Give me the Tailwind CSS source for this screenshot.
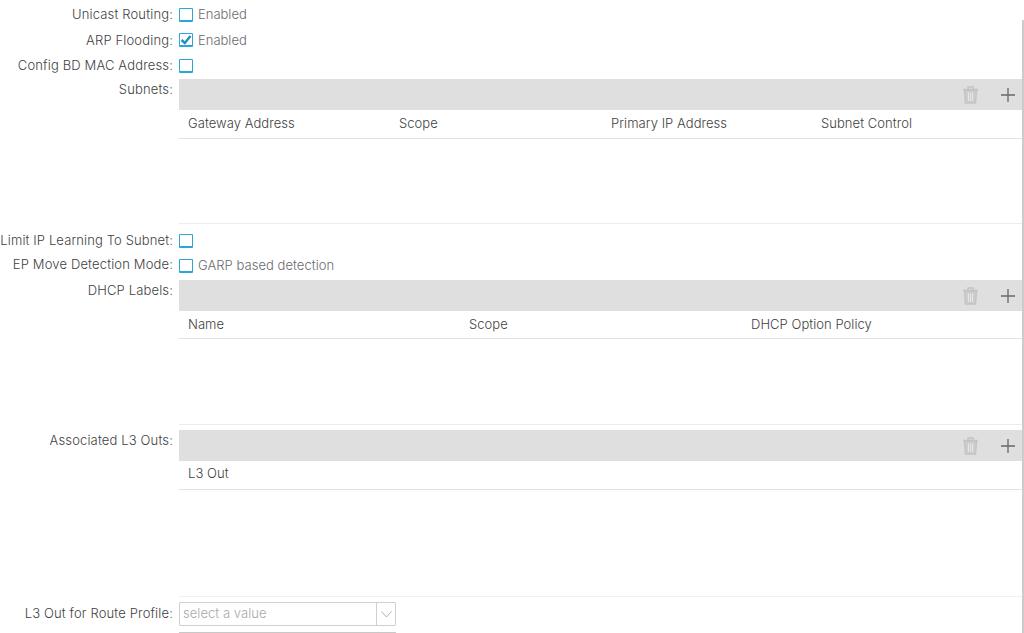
<!DOCTYPE html>
<html lang="en">
<head>
  <meta charset="UTF-8"/>
  <title>Bridge Domain</title>
  <script src="https://cdn.jsdelivr.net/npm/@tailwindcss/browser@4"></script>
</head>
<body class="bg-white">
  <div class="relative w-[1024px] h-[633px] overflow-hidden font-['Inter',sans-serif] font-light text-[13px] tracking-[0.05px] text-[#3f3f42] pt-[2px]">

    <!-- scrollbar on the right edge -->
    <div class="absolute right-0 top-[20px] bottom-0 w-[2px] bg-[#cccccc]"></div>

    <!-- Unicast Routing -->
    <div class="flex items-center h-[25px]">
      <div class="w-[173px] text-right tracking-[0.15px]">Unicast Routing:</div>
      <div class="ml-[6px] w-[14px] h-[14px] border border-[#2aa6dc] border-b-2 rounded-[1px]"></div>
      <span class="ml-[5px] text-[#6a6a6d] tracking-[0px]">Enabled</span>
    </div>

    <!-- ARP Flooding -->
    <div class="flex items-center h-[26px]">
      <div class="w-[173px] text-right tracking-[0.15px] pt-[1px]">ARP Flooding:</div>
      <div class="ml-[6px] w-[14px] h-[14px] border border-[#2aa6dc] border-b-2 rounded-[1px] flex items-center justify-center">
        <svg width="12" height="12" viewBox="0 0 12 12" fill="none" stroke="#1e8ec4" stroke-width="2.4"><path d="M1.5 6 L4.8 9 L10.5 2"/></svg>
      </div>
      <span class="ml-[5px] text-[#6a6a6d] tracking-[0px] pt-[1px]">Enabled</span>
    </div>

    <!-- Config BD MAC -->
    <div class="flex items-center h-[25px]">
      <div class="w-[173px] text-right tracking-[0.15px]">Config BD MAC Address:</div>
      <div class="ml-[6px] w-[14px] h-[14px] border border-[#2aa6dc] border-b-2 rounded-[1px]"></div>
    </div>

    <!-- Subnets -->
    <div class="flex mt-[1px]">
      <div class="w-[173px] text-right tracking-[0.15px] pt-[1px]">Subnets:</div>
      <div class="ml-[6px] w-[843px]">
        <div class="flex items-center justify-end h-[31px] bg-[#dfdfdf]">
          <svg class="mr-[21px]" width="17" height="18" viewBox="0 0 16 18" fill="none" stroke="#c4c4c4" stroke-width="1.5"><path d="M0.5 3.5 H15.5 M5.5 3 V1 H10.5 V3"/><path d="M2 4 L3 17 H13 L14 4 Z" fill="#cdcdcd"/><path d="M6 6.5 V15 M8 6.5 V15 M10 6.5 V15" stroke="#e6e6e6" stroke-width="1"/></svg>
          <svg class="mr-[6px]" width="16" height="16" viewBox="0 0 16 16" fill="none" stroke="#68686b" stroke-width="1.3"><path d="M8 1 V15 M1 8 H15"/></svg>
        </div>
        <div class="grid grid-cols-[211px_212px_210px_1fr] items-center h-[29px] border-b border-[#e2e2e2] pl-[9px]">
          <div>Gateway Address</div><div>Scope</div><div>Primary IP Address</div><div>Subnet Control</div>
        </div>
        <div class="h-[85px] border-b border-[#ececec]"></div>
      </div>
    </div>

    <!-- Limit IP Learning -->
    <div class="flex items-center h-[25px] mt-[4px]">
      <div class="w-[173px] text-right tracking-[0.12px] whitespace-nowrap">Limit IP Learning To Subnet:</div>
      <div class="ml-[6px] w-[14px] h-[14px] border border-[#2aa6dc] border-b-2 rounded-[1px]"></div>
    </div>

    <!-- EP Move -->
    <div class="flex items-center h-[25px]">
      <div class="w-[173px] text-right tracking-[0.15px] whitespace-nowrap pb-[2px]">EP Move Detection Mode:</div>
      <div class="ml-[6px] w-[14px] h-[14px] border border-[#2aa6dc] border-b-2 rounded-[1px]"></div>
      <span class="ml-[5px] text-[#6a6a6d]">GARP based detection</span>
    </div>

    <!-- DHCP Labels -->
    <div class="flex mt-[2px]">
      <div class="w-[173px] text-right tracking-[0.15px] pt-[1px]">DHCP Labels:</div>
      <div class="ml-[6px] w-[843px]">
        <div class="flex items-center justify-end h-[31px] bg-[#dfdfdf]">
          <svg class="mr-[21px]" width="17" height="18" viewBox="0 0 16 18" fill="none" stroke="#c4c4c4" stroke-width="1.5"><path d="M0.5 3.5 H15.5 M5.5 3 V1 H10.5 V3"/><path d="M2 4 L3 17 H13 L14 4 Z" fill="#cdcdcd"/><path d="M6 6.5 V15 M8 6.5 V15 M10 6.5 V15" stroke="#e6e6e6" stroke-width="1"/></svg>
          <svg class="mr-[6px]" width="16" height="16" viewBox="0 0 16 16" fill="none" stroke="#68686b" stroke-width="1.3"><path d="M8 1 V15 M1 8 H15"/></svg>
        </div>
        <div class="grid grid-cols-[281px_282px_1fr] items-center h-[28px] border-b border-[#e2e2e2] pl-[9px]">
          <div>Name</div><div>Scope</div><div>DHCP Option Policy</div>
        </div>
        <div class="h-[86px] border-b border-[#ececec]"></div>
      </div>
    </div>

    <!-- Associated L3 Outs -->
    <div class="flex mt-[5px]">
      <div class="w-[173px] text-right tracking-[0.15px] pt-[1px]">Associated L3 Outs:</div>
      <div class="ml-[6px] w-[843px]">
        <div class="flex items-center justify-end h-[31px] bg-[#dfdfdf]">
          <svg class="mr-[21px]" width="17" height="18" viewBox="0 0 16 18" fill="none" stroke="#c4c4c4" stroke-width="1.5"><path d="M0.5 3.5 H15.5 M5.5 3 V1 H10.5 V3"/><path d="M2 4 L3 17 H13 L14 4 Z" fill="#cdcdcd"/><path d="M6 6.5 V15 M8 6.5 V15 M10 6.5 V15" stroke="#e6e6e6" stroke-width="1"/></svg>
          <svg class="mr-[6px]" width="16" height="16" viewBox="0 0 16 16" fill="none" stroke="#68686b" stroke-width="1.3"><path d="M8 1 V15 M1 8 H15"/></svg>
        </div>
        <div class="flex items-center h-[29px] pb-[2px] border-b border-[#e2e2e2] pl-[9px]">L3 Out</div>
        <div class="h-[107px] border-b border-[#f0f0f0]"></div>
      </div>
    </div>

    <!-- L3 Out for Route Profile -->
    <div class="flex mt-[5px]">
      <div class="w-[173px] text-right tracking-[0.15px] pt-[2px]">L3 Out for Route Profile:</div>
      <div class="ml-[6px] w-[217px]">
        <div class="flex h-[24px] border border-[#d0d0d0] rounded-[1px]">
          <div class="flex-1 pl-[3px] flex items-center text-[#a8a8aa]">select a value</div>
          <div class="w-[19px] border-l border-[#d0d0d0] flex items-center justify-center">
            <svg width="11" height="7" viewBox="0 0 11 7" fill="none" stroke="#b0b0b0"><path d="M0.5 0.5 L5.5 6 L10.5 0.5"/></svg>
          </div>
        </div>
        <div class="mt-[6px] border-b border-[#c8c8c8]"></div>
      </div>
    </div>

  </div>
</body>
</html>
